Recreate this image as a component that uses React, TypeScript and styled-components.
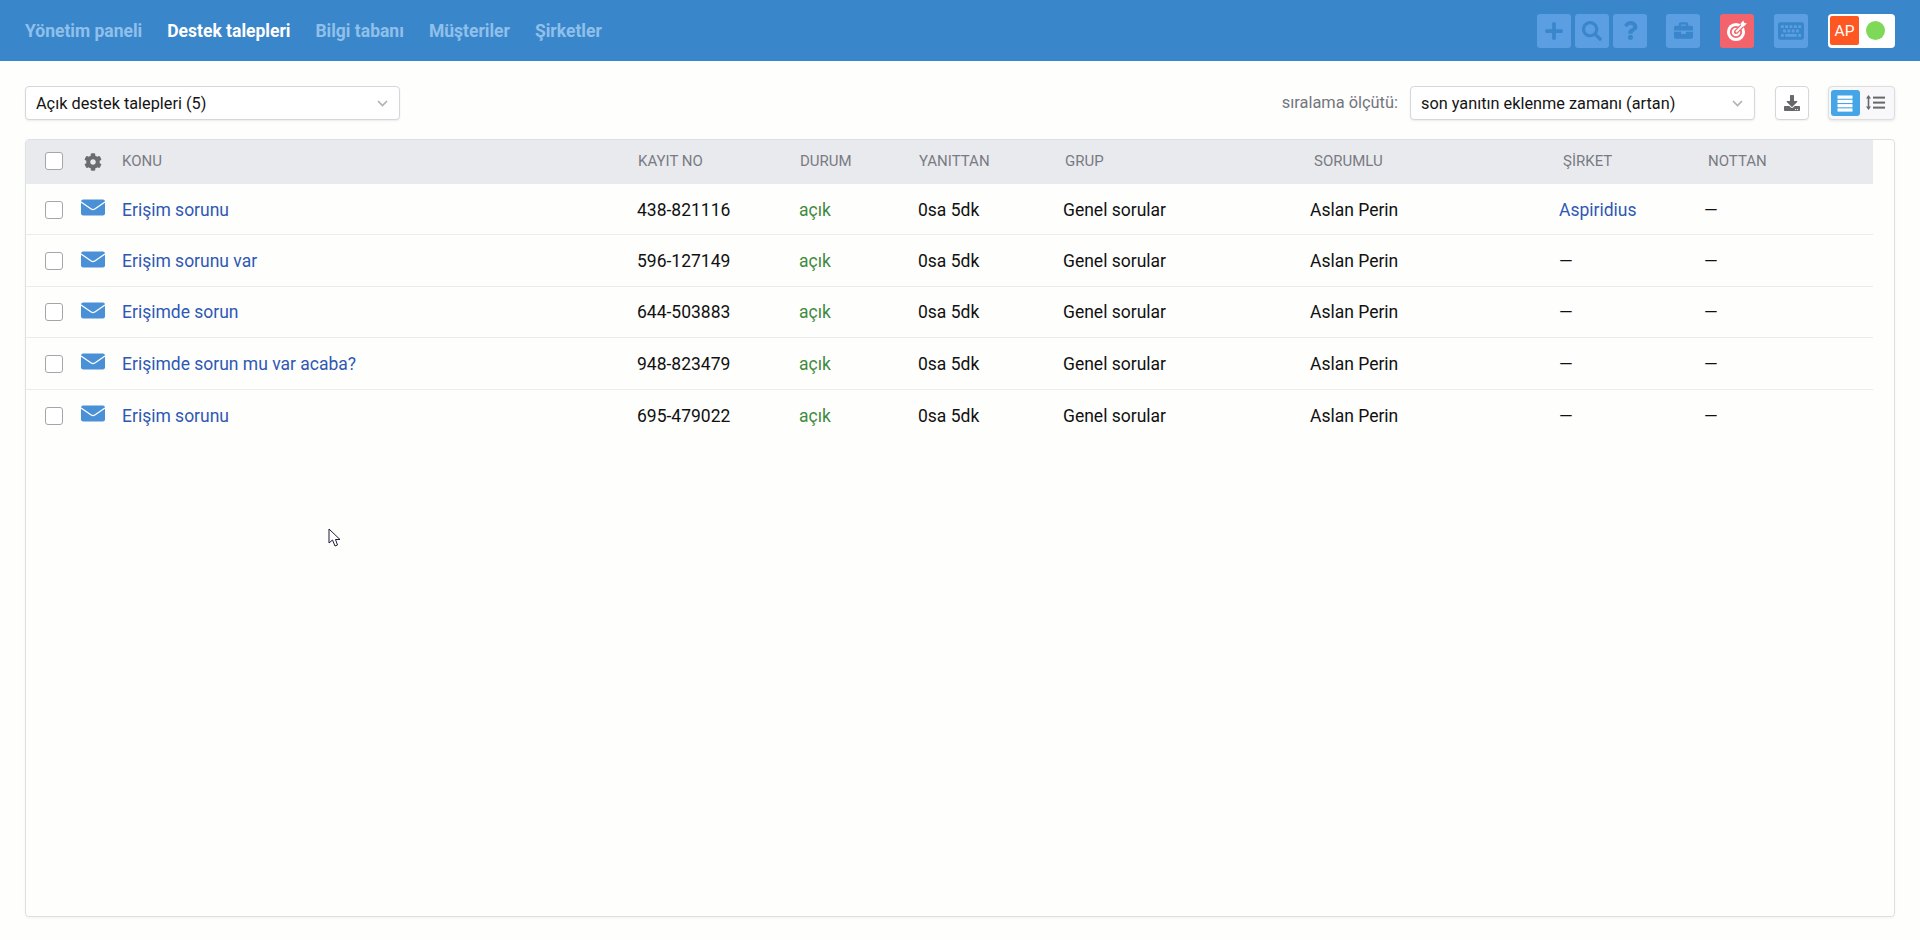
import React from "react";
import styled, { createGlobalStyle } from "styled-components";
import { FaPlus, FaSearch, FaQuestion, FaBriefcase, FaKeyboard, FaCog, FaDownload } from "react-icons/fa";

const Global = createGlobalStyle`
  html, body { margin: 0; padding: 0; height: 100%; background: #fefefd; }
  body { font-family: Roboto, "Liberation Sans", sans-serif; color: #111; overflow: hidden; }
  #root { height: 100%; }
`;

const Page = styled.div`
  width: 1920px;
  height: 940px;
  display: flex;
  flex-direction: column;
  position: relative;
`;

const TopBar = styled.header`
  height: 61px;
  flex: none;
  background: #3a86cb;
  display: flex;
  align-items: center;
  padding: 0 25px;
  justify-content: space-between;
`;

const Nav = styled.nav`
  display: flex;
  gap: 25px;
  padding-top: 1px;
`;

const NavItem = styled.a<{ $active?: boolean }>`
  font-size: 17.5px;
  font-weight: 700;
  color: ${(p) => (p.$active ? "#ffffff" : "#8fc0ea")};
`;

const TopActions = styled.div`
  display: flex;
  align-items: center;
`;

const TopBtn = styled.div<{ $gap?: number; $red?: boolean }>`
  width: 34px;
  height: 34px;
  border-radius: 3px;
  margin-left: ${(p) => p.$gap ?? 0}px;
  background: ${(p) => (p.$red ? "#f2636b" : "#5b9fe2")};
  color: ${(p) => (p.$red ? "#ffffff" : "#3a86cb")};
  display: flex;
  align-items: center;
  justify-content: center;
`;

const UserBadge = styled.div`
  margin-left: 20px;
  width: 67px;
  height: 34px;
  border-radius: 4px;
  background: #fff;
  display: flex;
  align-items: center;
  padding: 2px;
  box-sizing: border-box;
`;

const Avatar = styled.div`
  width: 29px;
  height: 29px;
  border-radius: 2px;
  background: #ff5722;
  color: #fff;
  font-size: 15.5px;
  display: flex;
  align-items: center;
  justify-content: center;
`;

const Dot = styled.span`
  width: 19px;
  height: 19px;
  border-radius: 50%;
  background: #7dd957;
  margin-left: 7px;
`;

const Toolbar = styled.div`
  flex: none;
  height: 78px;
  padding: 25px 25px 0;
  box-sizing: border-box;
  display: flex;
  align-items: flex-start;
`;

const SelectBox = styled.div<{ $width: number }>`
  width: ${(p) => p.$width}px;
  height: 34px;
  box-sizing: border-box;
  background: #fff;
  border: 1px solid #d6d7dc;
  border-radius: 4px;
  box-shadow: 0 1px 2px rgba(0, 0, 0, 0.08);
  font-size: 16.3px;
  display: flex;
  align-items: center;
  justify-content: space-between;
  padding: 0 11px 0 10px;
  color: #141414;
`;

const Spacer = styled.div`
  flex: 1;
`;

const SortLabel = styled.span`
  font-size: 16.4px;
  color: #73757d;
  line-height: 34px;
  margin-right: 12px;
`;

const IconBtn = styled.div`
  width: 34px;
  height: 34px;
  box-sizing: border-box;
  margin-left: 20px;
  background: #fff;
  border: 1px solid #d6d7dc;
  border-radius: 4px;
  color: #66686c;
  box-shadow: 0 1px 2px rgba(0, 0, 0, 0.06);
  display: flex;
  align-items: center;
  justify-content: center;
`;

const Toggle = styled.div`
  margin-left: 19px;
  width: 67px;
  height: 34px;
  box-sizing: border-box;
  border: 1px solid #dddee2;
  border-radius: 4px;
  background: #f8f8fa;
  box-shadow: 0 1px 3px rgba(0, 0, 0, 0.1);
  padding: 3px 2px;
  display: flex;
  align-items: stretch;
`;

const ToggleItem = styled.div<{ $active?: boolean }>`
  width: 29px;
  border-radius: 3px;
  background: ${(p) => (p.$active ? "#45a5e6" : "transparent")};
  color: ${(p) => (p.$active ? "#fff" : "#66686c")};
  display: flex;
  align-items: center;
  justify-content: center;
  margin-right: 2px;
`;

const Card = styled.section`
  margin: 0 25px;
  height: 778px;
  flex: none;
  box-sizing: border-box;
  border: 1px solid #dfe0e4;
  border-radius: 4px;
  box-shadow: 0 1px 3px rgba(0, 0, 0, 0.05);
  padding-right: 21px;
`;

const HeadRow = styled.div`
  height: 44px;
  box-sizing: border-box;
  padding-bottom: 2px;
  background: #e9eaee;
  display: grid;
  grid-template-columns: 39px 38px 516px 162px 119px 146px 249px 249px 145px 1fr;
  padding-left: 19px;
  align-items: center;
  font-size: 15px;
  color: #797b83;
`;

const Row = styled.div<{ $last?: boolean }>`
  height: 51.4px;
  box-sizing: border-box;
  padding-top: 1px;
  display: grid;
  grid-template-columns: 36px 41px 515px 162px 119px 145px 247px 249px 145px 1fr;
  padding-left: 19px;
  align-items: center;
  font-size: 17.5px;
  color: #111;
  border-bottom: ${(p) => (p.$last ? "none" : "1px solid #ececee")};
`;

const Check = styled.span`
  display: block;
  width: 18px;
  height: 18px;
  box-sizing: border-box;
  border: 1.5px solid #a4a6aa;
  border-radius: 3px;
  background: #fff;
`;

const Link = styled.a`
  color: #2f58b4;
`;

const Status = styled.span`
  color: #3f8a3e;
`;

const MailIcon = styled.svg`
  display: block;
  margin-top: -4px;
`;

const GearIcon = styled.span`
  display: flex;
  color: #6a6c70;
  margin-top: 2px;
`;

const Cursor = styled.svg`
  position: absolute;
  left: 328px;
  top: 528px;
`;

const Chevron = () => (
  <svg width="11" height="7" viewBox="0 0 11 7" fill="none" stroke="#aeb0b4" strokeWidth="1.6">
    <path d="M1 1 L5.5 5.5 L10 1" />
  </svg>
);

const Envelope = () => (
  <MailIcon width="24" height="17" viewBox="0 0 24 17">
    <rect x="0" y="0.5" width="24" height="16" rx="2.2" fill="#4a90d6" />
    <path d="M0 3 L10.2 10 Q12 11.2 13.8 10 L24 3" fill="none" stroke="#fff" strokeWidth="1.3" />
  </MailIcon>
);

const TargetIcon = () => (
  <svg width="22" height="23" viewBox="0 0 22 23" fill="none" stroke="#fff">
    <circle cx="10" cy="13" r="7.6" strokeWidth="3" />
    <circle cx="10" cy="13" r="3.2" strokeWidth="2.2" />
    <path d="M10 13 L19 4" stroke="#f2636b" strokeWidth="4.4" />
    <path d="M10 13 L18 5" strokeWidth="2" />
    <path d="M14.6 4.6 L17.4 1.4 L18.2 3.8 L20.8 4.4 L17.8 7.6 L15 7.2 Z" fill="#fff" strokeWidth="0" />
  </svg>
);

const LinesIcon = () => (
  <svg width="16" height="17" viewBox="0 0 16 17" fill="currentColor">
    <rect x="0.5" y="0.5" width="15" height="3.2" />
    <rect x="0.5" y="4.8" width="15" height="3.2" />
    <rect x="0.5" y="9.1" width="15" height="3.2" />
    <rect x="0.5" y="13.4" width="15" height="3.2" />
  </svg>
);

const SpacingIcon = () => (
  <svg width="19" height="18" viewBox="0 0 19 18" fill="currentColor">
    <path d="M2.5 1 L5 4.4 H3.3 V12.6 H5 L2.5 16 L0 12.6 H1.7 V4.4 H0 Z" />
    <rect x="7" y="2.6" width="12" height="2" />
    <rect x="7" y="7.6" width="12" height="2" />
    <rect x="7" y="12.6" width="12" height="2" />
  </svg>
);

const rows = [
  { subject: "Erişim sorunu", id: "438-821116", company: "Aspiridius" },
  { subject: "Erişim sorunu var", id: "596-127149" },
  { subject: "Erişimde sorun", id: "644-503883" },
  { subject: "Erişimde sorun mu var acaba?", id: "948-823479" },
  { subject: "Erişim sorunu", id: "695-479022" },
];

export default function App() {
  return (
    <Page>
      <Global />
      <TopBar>
        <Nav>
          <NavItem>Yönetim paneli</NavItem>
          <NavItem $active>Destek talepleri</NavItem>
          <NavItem>Bilgi tabanı</NavItem>
          <NavItem>Müşteriler</NavItem>
          <NavItem>Şirketler</NavItem>
        </Nav>
        <TopActions>
          <TopBtn><FaPlus size={20} /></TopBtn>
          <TopBtn $gap={4}><FaSearch size={20} /></TopBtn>
          <TopBtn $gap={4}><FaQuestion size={19} /></TopBtn>
          <TopBtn $gap={19}><FaBriefcase size={19} /></TopBtn>
          <TopBtn $gap={20} $red><TargetIcon /></TopBtn>
          <TopBtn $gap={20}><FaKeyboard size={26} /></TopBtn>
          <UserBadge>
            <Avatar>AP</Avatar>
            <Dot />
          </UserBadge>
        </TopActions>
      </TopBar>
      <Toolbar>
        <SelectBox $width={375}>
          Açık destek talepleri (5)
          <Chevron />
        </SelectBox>
        <Spacer />
        <SortLabel>sıralama ölçütü:</SortLabel>
        <SelectBox $width={345}>
          son yanıtın eklenme zamanı (artan)
          <Chevron />
        </SelectBox>
        <IconBtn><FaDownload size={16} /></IconBtn>
        <Toggle>
          <ToggleItem $active><LinesIcon /></ToggleItem>
          <ToggleItem><SpacingIcon /></ToggleItem>
        </Toggle>
      </Toolbar>
      <Card>
        <HeadRow>
          <Check />
          <GearIcon><FaCog size={18} /></GearIcon>
          <span>KONU</span>
          <span>KAYIT NO</span>
          <span>DURUM</span>
          <span>YANITTAN</span>
          <span>GRUP</span>
          <span>SORUMLU</span>
          <span>ŞİRKET</span>
          <span>NOTTAN</span>
        </HeadRow>
        {rows.map((r, i) => (
          <Row key={r.id} $last={i === rows.length - 1}>
            <Check />
            <Envelope />
            <Link>{r.subject}</Link>
            <span>{r.id}</span>
            <Status>açık</Status>
            <span>0sa 5dk</span>
            <span>Genel sorular</span>
            <span>Aslan Perin</span>
            {r.company ? <Link>{r.company}</Link> : <span>—</span>}
            <span>—</span>
          </Row>
        ))}
      </Card>
      <Cursor width="14" height="20" viewBox="0 0 14 20">
        <path d="M1 1 V15 L4.5 12 L7 18 L9.5 17 L7.5 11.5 H12 Z" fill="#fff" stroke="#1b1b3a" strokeWidth="1" />
      </Cursor>
    </Page>
  );
}
